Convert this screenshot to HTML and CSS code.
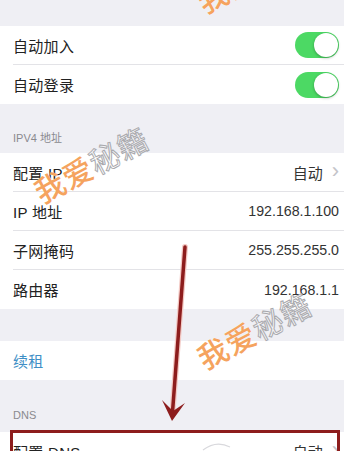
FILE: index.html
```html
<!DOCTYPE html>
<html lang="zh">
<head>
<meta charset="utf-8">
<link rel="stylesheet" href="styles.css">
</head>
<body>
<div class="page">
  <div class="gap gap-top"></div>
  <div class="group">
    <div class="row"><span class="label">自动加入</span><span class="toggle"><span class="knob"></span></span></div>
    <div class="row last"><span class="label">自动登录</span><span class="toggle"><span class="knob"></span></span></div>
  </div>
  <div class="header header-ip">IPV4 地址</div>
  <div class="group">
    <div class="row"><span class="label">配置 IP</span><span class="value link">自动<span class="chev">&#x203A;</span></span></div>
    <div class="row"><span class="label">IP 地址</span><span class="value">192.168.1.100</span></div>
    <div class="row"><span class="label">子网掩码</span><span class="value">255.255.255.0</span></div>
    <div class="row last"><span class="label">路由器</span><span class="value">192.168.1.1</span></div>
  </div>
  <div class="gap gap-mid"></div>
  <div class="group">
    <div class="row last"><span class="label blue">续租</span></div>
  </div>
  <div class="header header-dns">DNS</div>
  <div class="group">
    <div class="row last dns"><span class="label">配置 DNS</span><span class="value link">自动<span class="chev">&#x203A;</span></span></div>
  </div>

  <div class="wm wm1"><span class="o">我爱</span><span class="g">秘籍</span></div>
  <div class="wm wm2"><span class="o">我爱</span><span class="g">秘籍</span></div>
  <div class="wm wm3"><span class="o">我爱</span><span class="g">秘籍</span></div>

  <div class="redbox"></div>
  <svg class="arrow" width="344" height="451" viewBox="0 0 344 451">
    <line x1="185" y1="247" x2="172.5" y2="412" stroke="#f3c9c4" stroke-width="6" stroke-linecap="round"/>
    <line x1="185" y1="247" x2="172.5" y2="412" stroke="#8d1d1d" stroke-width="3.5" stroke-linecap="round"/>
    <path d="M162 400 L172 421 L185 403 L173 411 Z" fill="#8d1d1d"/>
    <path d="M203 450 Q216 440 230 447" fill="none" stroke="#d9d9dd" stroke-width="1.2"/>
  </svg>
</div>
</body>
</html>
```
FILE: styles.css
```css
html, body {
  margin: 0;
  padding: 0;
}
body {
  background: #efeff4;
  font-family: "Liberation Sans", "Noto Sans CJK SC", sans-serif;
  color: #1c1c1e;
  overflow: hidden;
}
.page {
  position: relative;
  width: 344px;
  height: 451px;
  overflow: hidden;
}
.gap-top { height: 26px; }
.gap-mid { height: 32px; }
.group {
  background: #fff;
}
.row {
  margin-left: 13px;
  padding-right: 5px;
  height: 38px;
  border-bottom: 1px solid #e3e3e7;
  display: flex;
  align-items: center;
  justify-content: space-between;
  font-size: 15px;
}
.row.last { border-bottom: none; height: 39px; }
.row.dns { align-items: flex-start; padding-top: 9px; box-sizing: border-box; }
.label { color: #222; letter-spacing: 0.3px; }
.label.blue { color: #3f8fc6; }
.value { color: #333; font-size: 14.2px; }
.value.link { font-size: 15px; display: flex; align-items: center; gap: 9px; }
.chev {
  color: #c4c4c9;
  font-size: 22px;
  line-height: 1;
  margin-top: -3px;
}
.header {
  font-size: 11px;
  color: #8a8a8f;
  padding-left: 13px;
  box-sizing: border-box;
  display: flex;
  align-items: flex-end;
}
.header-ip { height: 49px; padding-bottom: 8px; }
.header-dns { height: 52px; padding-bottom: 11px; }
.toggle {
  width: 44px;
  height: 26px;
  border-radius: 13px;
  background: #4cd964;
  position: relative;
  box-sizing: border-box;
}
.knob {
  position: absolute;
  right: 1px;
  top: 1px;
  width: 24px;
  height: 24px;
  border-radius: 50%;
  background: #fff;
  box-shadow: 0 1px 3px rgba(0,0,0,0.3);
}
.wm {
  position: absolute;
  font-family: "Noto Sans CJK SC", sans-serif;
  font-size: 30px;
  line-height: 30px;
  font-weight: 500;
  white-space: nowrap;
  transform: rotate(-28deg);
  transform-origin: left center;
  letter-spacing: 1px;
}
.wm .o {
  color: #f5a35e;
  text-shadow: 0 0 1px #fff;
}
.wm .g {
  color: rgba(255,255,255,0.4);
  -webkit-text-stroke: 1px #a9a9ad;
  font-weight: 400;
}
.wm1 { left: 36px; top: 178px; }
.wm2 { left: 199px; top: 344px; }
.wm3 { left: 199px; top: -12px; }
.redbox {
  position: absolute;
  left: 10px;
  top: 430px;
  width: 330px;
  height: 40px;
  border: 3px solid #8d1d1d;
  box-sizing: border-box;
}
.arrow {
  position: absolute;
  left: 0;
  top: 0;
}
```
